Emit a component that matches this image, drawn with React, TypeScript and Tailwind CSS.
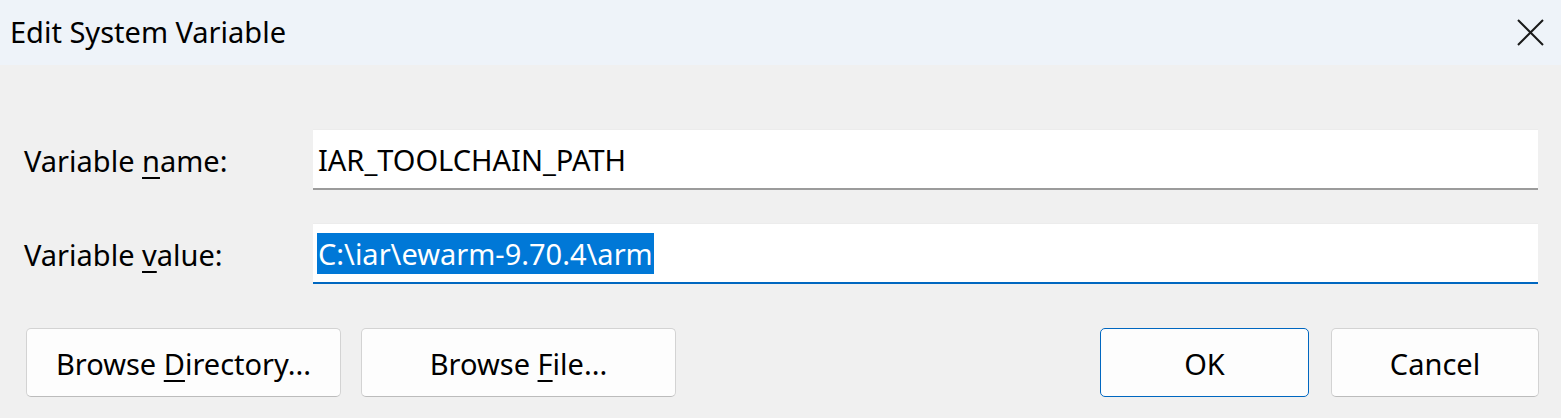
const font = "font-['Segoe_UI','Noto_Sans','Open_Sans',sans-serif]";

function DialogButton({
  children,
  width,
  primary,
}: {
  children: React.ReactNode;
  width: string;
  primary?: boolean;
}) {
  return (
    <button
      className={
        primary
          ? `${width} h-[69px] rounded-[5px] bg-[#fdfdfd] border border-[#0067c0] text-[29px] text-black pt-[2px]`
          : `${width} h-[69px] rounded-[5px] bg-[#fdfdfd] border border-[#d3d3d3] border-b-[#bcbcbc] text-[29px] text-black pt-[2px]`
      }
    >
      {children}
    </button>
  );
}

export default function App() {
  return (
    <div className={`w-[1561px] h-[418px] bg-[#f0f0f0] text-black ${font}`}>
      {/* Title bar */}
      <div className="h-[65px] bg-[#eef3f9] flex items-center justify-between pl-[10px] pr-[17px]">
        <span className="text-[29px] leading-none pb-[2px]">Edit System Variable</span>
        <svg width="27" height="27" viewBox="0 0 27 27" className="mb-[1px]">
          <path d="M1 1L26 26M26 1L1 26" stroke="#1a1a1a" strokeWidth="2" />
        </svg>
      </div>

      {/* Fields */}
      <div className="pt-[64px] pl-[24px]">
        <div className="flex items-center">
          <label className="w-[289px] text-[29px] pt-[2px]">
            Variable <u className="underline-offset-[5px] decoration-[1.5px]">n</u>ame:
          </label>
          <div className="w-[1225px] h-[61px] bg-white border-t border-[#ececec] border-b-2 border-b-[#9b9b9b] flex items-center pl-[5px]">
            <span className="text-[29px] leading-none">IAR_TOOLCHAIN_PATH</span>
          </div>
        </div>

        <div className="flex items-center mt-[33px]">
          <label className="w-[289px] text-[29px] pt-[2px]">
            Variable <u className="underline-offset-[5px] decoration-[1.5px]">v</u>alue:
          </label>
          <div className="w-[1225px] h-[61px] bg-white border-t border-[#ececec] border-b-2 border-b-[#0067c0] flex items-center pl-[4px]">
            <span className="bg-[#0078d7] text-white text-[29px] leading-[41px] h-[41px] px-[1px]">
              C:\iar\ewarm-9.70.4\arm
            </span>
          </div>
        </div>
      </div>

      {/* Buttons */}
      <div className="flex items-center mt-[44px] pl-[26px] pr-[22px]">
        <div className="flex gap-[20px]">
          <DialogButton width="w-[315px]">
            Browse <u className="underline-offset-[5px] decoration-[1.5px]">D</u>irectory...
          </DialogButton>
          <DialogButton width="w-[315px]">
            Browse <u className="underline-offset-[5px] decoration-[1.5px]">F</u>ile...
          </DialogButton>
        </div>
        <div className="ml-auto flex gap-[22px]">
          <DialogButton width="w-[209px]" primary>
            OK
          </DialogButton>
          <DialogButton width="w-[208px]">Cancel</DialogButton>
        </div>
      </div>
    </div>
  );
}
